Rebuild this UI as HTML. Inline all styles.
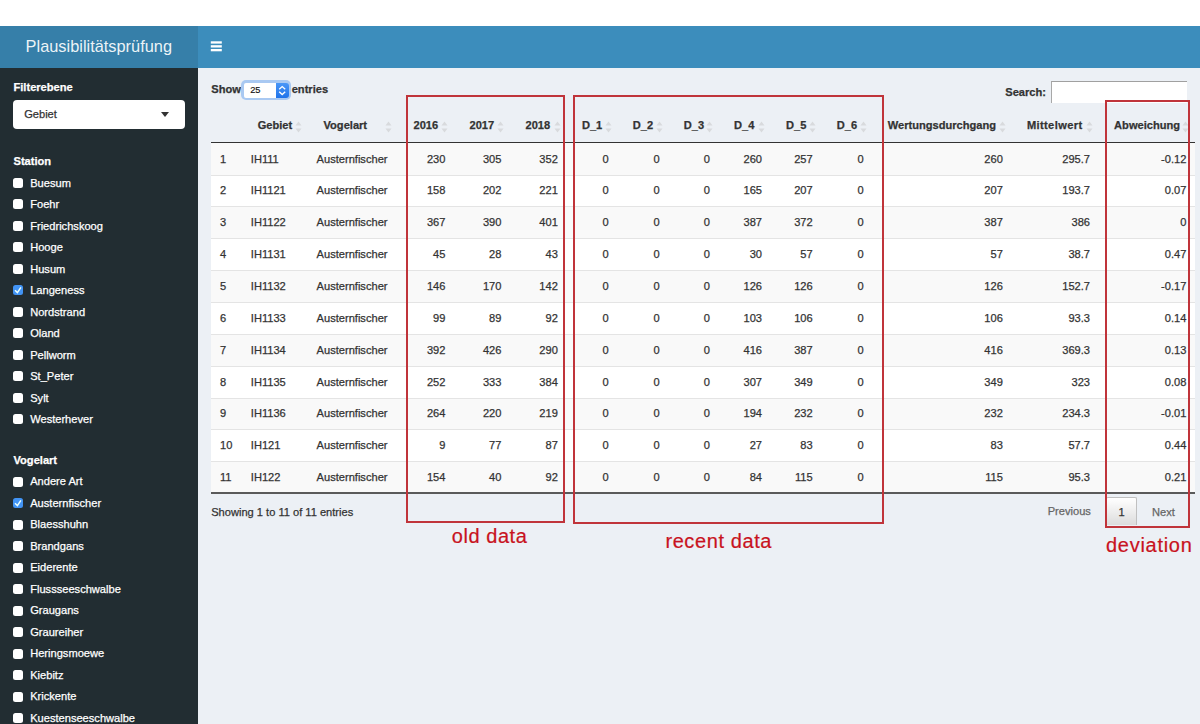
<!DOCTYPE html>
<html><head><meta charset="utf-8"><style>
html,body{margin:0;padding:0;width:1200px;height:724px;overflow:hidden;background:#fff;font-family:"Liberation Sans",sans-serif;}
.t{position:absolute;white-space:nowrap;-webkit-text-stroke:0.25px currentColor;}
.abs{position:absolute;}
</style></head><body>
<div class="abs" style="left:0;top:26px;width:198px;height:42px;background:#367fa9"></div>
<div class="abs" style="left:198px;top:26px;width:1002px;height:42px;background:#3c8dbc"></div>
<div class="t" style="left:25.60px;top:38.15px;font-size:16.36px;line-height:16.36px;font-weight:400;color:rgba(255,255,255,0.92);-webkit-text-stroke:0;">Plausibilitätsprüfung</div>
<svg class="abs" style="left:200px;top:30px" width="30" height="30" viewBox="200 30 30 30"><rect x="210.8" y="41.3" width="11" height="2.3" fill="#fff"/><rect x="210.8" y="45.2" width="11" height="2.3" fill="#fff"/><rect x="210.8" y="49.0" width="11" height="2.3" fill="#fff"/></svg>
<div class="abs" style="left:0;top:68px;width:198px;height:656px;background:#222d32"></div>
<div class="abs" style="left:198px;top:68px;width:1002px;height:656px;background:#ecf0f5"></div>
<div class="t" style="left:13.50px;top:82.10px;font-size:11.1px;line-height:11.1px;font-weight:700;color:#fff;">Filterebene</div>
<div class="abs" style="left:13px;top:100px;width:172px;height:29px;background:#fff;border-radius:4px"></div>
<div class="t" style="left:24.20px;top:109.40px;font-size:11.1px;line-height:11.1px;font-weight:400;color:#333;">Gebiet</div>
<div class="abs" style="left:161px;top:112px;width:0;height:0;border-left:4.5px solid transparent;border-right:4.5px solid transparent;border-top:5px solid #333"></div>
<div class="t" style="left:13.50px;top:156.10px;font-size:11.1px;line-height:11.1px;font-weight:700;color:#fff;">Station</div>
<div class="abs" style="left:13px;top:177.70px;width:10px;height:10px;background:#fff;border-radius:2.5px"></div>
<div class="t" style="left:30.20px;top:177.60px;font-size:11.1px;line-height:11.1px;font-weight:400;color:#fff;">Buesum</div>
<div class="abs" style="left:13px;top:199.22px;width:10px;height:10px;background:#fff;border-radius:2.5px"></div>
<div class="t" style="left:30.20px;top:199.12px;font-size:11.1px;line-height:11.1px;font-weight:400;color:#fff;">Foehr</div>
<div class="abs" style="left:13px;top:220.74px;width:10px;height:10px;background:#fff;border-radius:2.5px"></div>
<div class="t" style="left:30.20px;top:220.64px;font-size:11.1px;line-height:11.1px;font-weight:400;color:#fff;">Friedrichskoog</div>
<div class="abs" style="left:13px;top:242.26px;width:10px;height:10px;background:#fff;border-radius:2.5px"></div>
<div class="t" style="left:30.20px;top:242.16px;font-size:11.1px;line-height:11.1px;font-weight:400;color:#fff;">Hooge</div>
<div class="abs" style="left:13px;top:263.78px;width:10px;height:10px;background:#fff;border-radius:2.5px"></div>
<div class="t" style="left:30.20px;top:263.68px;font-size:11.1px;line-height:11.1px;font-weight:400;color:#fff;">Husum</div>
<div class="abs" style="left:13px;top:285.30px;width:10px;height:10px;background:#4294f5;border-radius:2.5px"><svg width="10" height="10" viewBox="0 0 10 10" style="position:absolute;left:0;top:0"><path d="M2 5.2 L4.4 7.6 L7.9 2.3" stroke="#eaffff" stroke-width="1.5" fill="none"/></svg></div>
<div class="t" style="left:30.20px;top:285.20px;font-size:11.1px;line-height:11.1px;font-weight:400;color:#fff;">Langeness</div>
<div class="abs" style="left:13px;top:306.82px;width:10px;height:10px;background:#fff;border-radius:2.5px"></div>
<div class="t" style="left:30.20px;top:306.72px;font-size:11.1px;line-height:11.1px;font-weight:400;color:#fff;">Nordstrand</div>
<div class="abs" style="left:13px;top:328.34px;width:10px;height:10px;background:#fff;border-radius:2.5px"></div>
<div class="t" style="left:30.20px;top:328.24px;font-size:11.1px;line-height:11.1px;font-weight:400;color:#fff;">Oland</div>
<div class="abs" style="left:13px;top:349.86px;width:10px;height:10px;background:#fff;border-radius:2.5px"></div>
<div class="t" style="left:30.20px;top:349.76px;font-size:11.1px;line-height:11.1px;font-weight:400;color:#fff;">Pellworm</div>
<div class="abs" style="left:13px;top:371.38px;width:10px;height:10px;background:#fff;border-radius:2.5px"></div>
<div class="t" style="left:30.20px;top:371.28px;font-size:11.1px;line-height:11.1px;font-weight:400;color:#fff;">St_Peter</div>
<div class="abs" style="left:13px;top:392.90px;width:10px;height:10px;background:#fff;border-radius:2.5px"></div>
<div class="t" style="left:30.20px;top:392.80px;font-size:11.1px;line-height:11.1px;font-weight:400;color:#fff;">Sylt</div>
<div class="abs" style="left:13px;top:414.42px;width:10px;height:10px;background:#fff;border-radius:2.5px"></div>
<div class="t" style="left:30.20px;top:414.32px;font-size:11.1px;line-height:11.1px;font-weight:400;color:#fff;">Westerhever</div>
<div class="t" style="left:13.50px;top:454.60px;font-size:11.1px;line-height:11.1px;font-weight:700;color:#fff;">Vogelart</div>
<div class="abs" style="left:13px;top:476.50px;width:10px;height:10px;background:#fff;border-radius:2.5px"></div>
<div class="t" style="left:30.20px;top:476.40px;font-size:11.1px;line-height:11.1px;font-weight:400;color:#fff;">Andere Art</div>
<div class="abs" style="left:13px;top:498.00px;width:10px;height:10px;background:#4294f5;border-radius:2.5px"><svg width="10" height="10" viewBox="0 0 10 10" style="position:absolute;left:0;top:0"><path d="M2 5.2 L4.4 7.6 L7.9 2.3" stroke="#eaffff" stroke-width="1.5" fill="none"/></svg></div>
<div class="t" style="left:30.20px;top:497.90px;font-size:11.1px;line-height:11.1px;font-weight:400;color:#fff;">Austernfischer</div>
<div class="abs" style="left:13px;top:519.50px;width:10px;height:10px;background:#fff;border-radius:2.5px"></div>
<div class="t" style="left:30.20px;top:519.40px;font-size:11.1px;line-height:11.1px;font-weight:400;color:#fff;">Blaesshuhn</div>
<div class="abs" style="left:13px;top:541.00px;width:10px;height:10px;background:#fff;border-radius:2.5px"></div>
<div class="t" style="left:30.20px;top:540.90px;font-size:11.1px;line-height:11.1px;font-weight:400;color:#fff;">Brandgans</div>
<div class="abs" style="left:13px;top:562.50px;width:10px;height:10px;background:#fff;border-radius:2.5px"></div>
<div class="t" style="left:30.20px;top:562.40px;font-size:11.1px;line-height:11.1px;font-weight:400;color:#fff;">Eiderente</div>
<div class="abs" style="left:13px;top:584.00px;width:10px;height:10px;background:#fff;border-radius:2.5px"></div>
<div class="t" style="left:30.20px;top:583.90px;font-size:11.1px;line-height:11.1px;font-weight:400;color:#fff;">Flussseeschwalbe</div>
<div class="abs" style="left:13px;top:605.50px;width:10px;height:10px;background:#fff;border-radius:2.5px"></div>
<div class="t" style="left:30.20px;top:605.40px;font-size:11.1px;line-height:11.1px;font-weight:400;color:#fff;">Graugans</div>
<div class="abs" style="left:13px;top:627.00px;width:10px;height:10px;background:#fff;border-radius:2.5px"></div>
<div class="t" style="left:30.20px;top:626.90px;font-size:11.1px;line-height:11.1px;font-weight:400;color:#fff;">Graureiher</div>
<div class="abs" style="left:13px;top:648.50px;width:10px;height:10px;background:#fff;border-radius:2.5px"></div>
<div class="t" style="left:30.20px;top:648.40px;font-size:11.1px;line-height:11.1px;font-weight:400;color:#fff;">Heringsmoewe</div>
<div class="abs" style="left:13px;top:670.00px;width:10px;height:10px;background:#fff;border-radius:2.5px"></div>
<div class="t" style="left:30.20px;top:669.90px;font-size:11.1px;line-height:11.1px;font-weight:400;color:#fff;">Kiebitz</div>
<div class="abs" style="left:13px;top:691.50px;width:10px;height:10px;background:#fff;border-radius:2.5px"></div>
<div class="t" style="left:30.20px;top:691.40px;font-size:11.1px;line-height:11.1px;font-weight:400;color:#fff;">Krickente</div>
<div class="abs" style="left:13px;top:713.00px;width:10px;height:10px;background:#fff;border-radius:2.5px"></div>
<div class="t" style="left:30.20px;top:712.90px;font-size:11.1px;line-height:11.1px;font-weight:400;color:#fff;">Kuestenseeschwalbe</div>
<div class="t" style="left:211.30px;top:84.40px;font-size:11.1px;line-height:11.1px;font-weight:700;color:#333;">Show</div>
<div class="abs" style="left:240.5px;top:80.2px;width:50px;height:20.3px;background:#a9c9f2;border-radius:5px"></div>
<div class="abs" style="left:243.5px;top:83px;width:32px;height:14.5px;background:#fff;border-radius:2px 0 0 2px"></div>
<div class="abs" style="left:276px;top:82.6px;width:12.5px;height:15.2px;background:linear-gradient(#4a97f7,#1f73ea);border-radius:0 3px 3px 0"></div>
<svg class="abs" style="left:276px;top:82.6px" width="13" height="15" viewBox="0 0 13 15"><path d="M3.2 6.2 L6.2 3.6 L9.2 6.2 M3.2 8.8 L6.2 11.6 L9.2 8.8" stroke="#fff" stroke-width="1.35" fill="none"/></svg>
<div class="t" style="left:250.20px;top:85.83px;font-size:9.3px;line-height:9.3px;font-weight:400;color:#111;-webkit-text-stroke:0.15px currentColor;">25</div>
<div class="t" style="left:291.70px;top:84.40px;font-size:11.1px;line-height:11.1px;font-weight:700;color:#333;">entries</div>
<div class="t" style="left:1005.30px;top:87.20px;font-size:11.1px;line-height:11.1px;font-weight:700;color:#333;">Search:</div>
<div class="abs" style="left:1051.3px;top:81px;width:135px;height:20.5px;background:#fff;border-top:1.6px solid #a0a0a0;border-left:1px solid #a8a8a8"></div>
<div class="abs" style="left:211px;top:143.20px;width:984px;height:31.85px;background:#f9f9f9"></div>
<div class="abs" style="left:211px;top:175.05px;width:984px;height:31.85px;background:#ffffff"></div>
<div class="abs" style="left:211px;top:174.55px;width:984px;height:1px;background:#e4e4e4"></div>
<div class="abs" style="left:211px;top:206.90px;width:984px;height:31.85px;background:#f9f9f9"></div>
<div class="abs" style="left:211px;top:206.40px;width:984px;height:1px;background:#e4e4e4"></div>
<div class="abs" style="left:211px;top:238.75px;width:984px;height:31.85px;background:#ffffff"></div>
<div class="abs" style="left:211px;top:238.25px;width:984px;height:1px;background:#e4e4e4"></div>
<div class="abs" style="left:211px;top:270.60px;width:984px;height:31.85px;background:#f9f9f9"></div>
<div class="abs" style="left:211px;top:270.10px;width:984px;height:1px;background:#e4e4e4"></div>
<div class="abs" style="left:211px;top:302.45px;width:984px;height:31.85px;background:#ffffff"></div>
<div class="abs" style="left:211px;top:301.95px;width:984px;height:1px;background:#e4e4e4"></div>
<div class="abs" style="left:211px;top:334.30px;width:984px;height:31.85px;background:#f9f9f9"></div>
<div class="abs" style="left:211px;top:333.80px;width:984px;height:1px;background:#e4e4e4"></div>
<div class="abs" style="left:211px;top:366.15px;width:984px;height:31.85px;background:#ffffff"></div>
<div class="abs" style="left:211px;top:365.65px;width:984px;height:1px;background:#e4e4e4"></div>
<div class="abs" style="left:211px;top:398.00px;width:984px;height:31.85px;background:#f9f9f9"></div>
<div class="abs" style="left:211px;top:397.50px;width:984px;height:1px;background:#e4e4e4"></div>
<div class="abs" style="left:211px;top:429.85px;width:984px;height:31.85px;background:#ffffff"></div>
<div class="abs" style="left:211px;top:429.35px;width:984px;height:1px;background:#e4e4e4"></div>
<div class="abs" style="left:211px;top:461.70px;width:984px;height:31.85px;background:#f9f9f9"></div>
<div class="abs" style="left:211px;top:461.20px;width:984px;height:1px;background:#e4e4e4"></div>
<div class="abs" style="left:211px;top:141.7px;width:984px;height:1.5px;background:#333"></div>
<div class="abs" style="left:211px;top:492px;width:984px;height:2px;background:#5a5a5a"></div>
<div class="t" style="left:257.70px;top:120.10px;font-size:11.1px;line-height:11.1px;font-weight:700;color:#333;">Gebiet</div>
<div class="abs" style="left:295.20px;top:118.6px;width:7px;height:12px"><svg width="7" height="12" viewBox="0 0 7 12"><path d="M3.5 0.5 L6.5 4.5 L0.5 4.5 Z M3.5 11.5 L6.5 7.5 L0.5 7.5 Z" fill="#d8dadd"/></svg></div>
<div class="t" style="left:323.50px;top:120.10px;font-size:11.1px;line-height:11.1px;font-weight:700;color:#333;">Vogelart</div>
<div class="abs" style="left:385.20px;top:118.6px;width:7px;height:12px"><svg width="7" height="12" viewBox="0 0 7 12"><path d="M3.5 0.5 L6.5 4.5 L0.5 4.5 Z M3.5 11.5 L6.5 7.5 L0.5 7.5 Z" fill="#d8dadd"/></svg></div>
<div class="t" style="left:413.50px;top:120.10px;font-size:11.1px;line-height:11.1px;font-weight:700;color:#333;">2016</div>
<div class="abs" style="left:441.20px;top:118.6px;width:7px;height:12px"><svg width="7" height="12" viewBox="0 0 7 12"><path d="M3.5 0.5 L6.5 4.5 L0.5 4.5 Z M3.5 11.5 L6.5 7.5 L0.5 7.5 Z" fill="#d8dadd"/></svg></div>
<div class="t" style="left:469.50px;top:120.10px;font-size:11.1px;line-height:11.1px;font-weight:700;color:#333;">2017</div>
<div class="abs" style="left:497.20px;top:118.6px;width:7px;height:12px"><svg width="7" height="12" viewBox="0 0 7 12"><path d="M3.5 0.5 L6.5 4.5 L0.5 4.5 Z M3.5 11.5 L6.5 7.5 L0.5 7.5 Z" fill="#d8dadd"/></svg></div>
<div class="t" style="left:525.50px;top:120.10px;font-size:11.1px;line-height:11.1px;font-weight:700;color:#333;">2018</div>
<div class="abs" style="left:553.60px;top:118.6px;width:7px;height:12px"><svg width="7" height="12" viewBox="0 0 7 12"><path d="M3.5 0.5 L6.5 4.5 L0.5 4.5 Z M3.5 11.5 L6.5 7.5 L0.5 7.5 Z" fill="#d8dadd"/></svg></div>
<div class="t" style="left:581.90px;top:120.10px;font-size:11.1px;line-height:11.1px;font-weight:700;color:#333;">D_1</div>
<div class="abs" style="left:604.50px;top:118.6px;width:7px;height:12px"><svg width="7" height="12" viewBox="0 0 7 12"><path d="M3.5 0.5 L6.5 4.5 L0.5 4.5 Z M3.5 11.5 L6.5 7.5 L0.5 7.5 Z" fill="#d8dadd"/></svg></div>
<div class="t" style="left:632.80px;top:120.10px;font-size:11.1px;line-height:11.1px;font-weight:700;color:#333;">D_2</div>
<div class="abs" style="left:655.50px;top:118.6px;width:7px;height:12px"><svg width="7" height="12" viewBox="0 0 7 12"><path d="M3.5 0.5 L6.5 4.5 L0.5 4.5 Z M3.5 11.5 L6.5 7.5 L0.5 7.5 Z" fill="#d8dadd"/></svg></div>
<div class="t" style="left:683.80px;top:120.10px;font-size:11.1px;line-height:11.1px;font-weight:700;color:#333;">D_3</div>
<div class="abs" style="left:705.80px;top:118.6px;width:7px;height:12px"><svg width="7" height="12" viewBox="0 0 7 12"><path d="M3.5 0.5 L6.5 4.5 L0.5 4.5 Z M3.5 11.5 L6.5 7.5 L0.5 7.5 Z" fill="#d8dadd"/></svg></div>
<div class="t" style="left:734.10px;top:120.10px;font-size:11.1px;line-height:11.1px;font-weight:700;color:#333;">D_4</div>
<div class="abs" style="left:757.80px;top:118.6px;width:7px;height:12px"><svg width="7" height="12" viewBox="0 0 7 12"><path d="M3.5 0.5 L6.5 4.5 L0.5 4.5 Z M3.5 11.5 L6.5 7.5 L0.5 7.5 Z" fill="#d8dadd"/></svg></div>
<div class="t" style="left:786.10px;top:120.10px;font-size:11.1px;line-height:11.1px;font-weight:700;color:#333;">D_5</div>
<div class="abs" style="left:808.50px;top:118.6px;width:7px;height:12px"><svg width="7" height="12" viewBox="0 0 7 12"><path d="M3.5 0.5 L6.5 4.5 L0.5 4.5 Z M3.5 11.5 L6.5 7.5 L0.5 7.5 Z" fill="#d8dadd"/></svg></div>
<div class="t" style="left:836.80px;top:120.10px;font-size:11.1px;line-height:11.1px;font-weight:700;color:#333;">D_6</div>
<div class="abs" style="left:859.50px;top:118.6px;width:7px;height:12px"><svg width="7" height="12" viewBox="0 0 7 12"><path d="M3.5 0.5 L6.5 4.5 L0.5 4.5 Z M3.5 11.5 L6.5 7.5 L0.5 7.5 Z" fill="#d8dadd"/></svg></div>
<div class="t" style="left:887.80px;top:120.10px;font-size:11.1px;line-height:11.1px;font-weight:700;color:#333;">Wertungsdurchgang</div>
<div class="abs" style="left:998.60px;top:118.6px;width:7px;height:12px"><svg width="7" height="12" viewBox="0 0 7 12"><path d="M3.5 0.5 L6.5 4.5 L0.5 4.5 Z M3.5 11.5 L6.5 7.5 L0.5 7.5 Z" fill="#d8dadd"/></svg></div>
<div class="t" style="left:1026.90px;top:120.10px;font-size:11.1px;line-height:11.1px;font-weight:700;color:#333;letter-spacing:0.38px;">Mittelwert</div>
<div class="abs" style="left:1085.80px;top:118.6px;width:7px;height:12px"><svg width="7" height="12" viewBox="0 0 7 12"><path d="M3.5 0.5 L6.5 4.5 L0.5 4.5 Z M3.5 11.5 L6.5 7.5 L0.5 7.5 Z" fill="#d8dadd"/></svg></div>
<div class="t" style="left:1114.10px;top:120.10px;font-size:11.1px;line-height:11.1px;font-weight:700;color:#333;">Abweichung</div>
<div class="abs" style="left:1182.20px;top:118.6px;width:7px;height:12px"><svg width="7" height="12" viewBox="0 0 7 12"><path d="M3.5 0.5 L6.5 4.5 L0.5 4.5 Z M3.5 11.5 L6.5 7.5 L0.5 7.5 Z" fill="#d8dadd"/></svg></div>
<div class="t" style="left:220.00px;top:153.60px;font-size:11.1px;line-height:11.1px;font-weight:400;color:#333;">1</div>
<div class="t" style="left:250.80px;top:153.60px;font-size:11.1px;line-height:11.1px;font-weight:400;color:#333;">IH111</div>
<div class="t" style="left:316.60px;top:153.60px;font-size:11.1px;line-height:11.1px;font-weight:400;color:#333;">Austernfischer</div>
<div class="t" style="right:754.60px;top:153.60px;font-size:11.1px;line-height:11.1px;font-weight:400;color:#333;">230</div>
<div class="t" style="right:698.60px;top:153.60px;font-size:11.1px;line-height:11.1px;font-weight:400;color:#333;">305</div>
<div class="t" style="right:642.20px;top:153.60px;font-size:11.1px;line-height:11.1px;font-weight:400;color:#333;">352</div>
<div class="t" style="right:591.30px;top:153.60px;font-size:11.1px;line-height:11.1px;font-weight:400;color:#333;">0</div>
<div class="t" style="right:540.30px;top:153.60px;font-size:11.1px;line-height:11.1px;font-weight:400;color:#333;">0</div>
<div class="t" style="right:490.00px;top:153.60px;font-size:11.1px;line-height:11.1px;font-weight:400;color:#333;">0</div>
<div class="t" style="right:438.00px;top:153.60px;font-size:11.1px;line-height:11.1px;font-weight:400;color:#333;">260</div>
<div class="t" style="right:387.30px;top:153.60px;font-size:11.1px;line-height:11.1px;font-weight:400;color:#333;">257</div>
<div class="t" style="right:336.30px;top:153.60px;font-size:11.1px;line-height:11.1px;font-weight:400;color:#333;">0</div>
<div class="t" style="right:197.20px;top:153.60px;font-size:11.1px;line-height:11.1px;font-weight:400;color:#333;">260</div>
<div class="t" style="right:110.00px;top:153.60px;font-size:11.1px;line-height:11.1px;font-weight:400;color:#333;">295.7</div>
<div class="t" style="right:13.60px;top:153.60px;font-size:11.1px;line-height:11.1px;font-weight:400;color:#333;">-0.12</div>
<div class="t" style="left:220.00px;top:185.45px;font-size:11.1px;line-height:11.1px;font-weight:400;color:#333;">2</div>
<div class="t" style="left:250.80px;top:185.45px;font-size:11.1px;line-height:11.1px;font-weight:400;color:#333;">IH1121</div>
<div class="t" style="left:316.60px;top:185.45px;font-size:11.1px;line-height:11.1px;font-weight:400;color:#333;">Austernfischer</div>
<div class="t" style="right:754.60px;top:185.45px;font-size:11.1px;line-height:11.1px;font-weight:400;color:#333;">158</div>
<div class="t" style="right:698.60px;top:185.45px;font-size:11.1px;line-height:11.1px;font-weight:400;color:#333;">202</div>
<div class="t" style="right:642.20px;top:185.45px;font-size:11.1px;line-height:11.1px;font-weight:400;color:#333;">221</div>
<div class="t" style="right:591.30px;top:185.45px;font-size:11.1px;line-height:11.1px;font-weight:400;color:#333;">0</div>
<div class="t" style="right:540.30px;top:185.45px;font-size:11.1px;line-height:11.1px;font-weight:400;color:#333;">0</div>
<div class="t" style="right:490.00px;top:185.45px;font-size:11.1px;line-height:11.1px;font-weight:400;color:#333;">0</div>
<div class="t" style="right:438.00px;top:185.45px;font-size:11.1px;line-height:11.1px;font-weight:400;color:#333;">165</div>
<div class="t" style="right:387.30px;top:185.45px;font-size:11.1px;line-height:11.1px;font-weight:400;color:#333;">207</div>
<div class="t" style="right:336.30px;top:185.45px;font-size:11.1px;line-height:11.1px;font-weight:400;color:#333;">0</div>
<div class="t" style="right:197.20px;top:185.45px;font-size:11.1px;line-height:11.1px;font-weight:400;color:#333;">207</div>
<div class="t" style="right:110.00px;top:185.45px;font-size:11.1px;line-height:11.1px;font-weight:400;color:#333;">193.7</div>
<div class="t" style="right:13.60px;top:185.45px;font-size:11.1px;line-height:11.1px;font-weight:400;color:#333;">0.07</div>
<div class="t" style="left:220.00px;top:217.30px;font-size:11.1px;line-height:11.1px;font-weight:400;color:#333;">3</div>
<div class="t" style="left:250.80px;top:217.30px;font-size:11.1px;line-height:11.1px;font-weight:400;color:#333;">IH1122</div>
<div class="t" style="left:316.60px;top:217.30px;font-size:11.1px;line-height:11.1px;font-weight:400;color:#333;">Austernfischer</div>
<div class="t" style="right:754.60px;top:217.30px;font-size:11.1px;line-height:11.1px;font-weight:400;color:#333;">367</div>
<div class="t" style="right:698.60px;top:217.30px;font-size:11.1px;line-height:11.1px;font-weight:400;color:#333;">390</div>
<div class="t" style="right:642.20px;top:217.30px;font-size:11.1px;line-height:11.1px;font-weight:400;color:#333;">401</div>
<div class="t" style="right:591.30px;top:217.30px;font-size:11.1px;line-height:11.1px;font-weight:400;color:#333;">0</div>
<div class="t" style="right:540.30px;top:217.30px;font-size:11.1px;line-height:11.1px;font-weight:400;color:#333;">0</div>
<div class="t" style="right:490.00px;top:217.30px;font-size:11.1px;line-height:11.1px;font-weight:400;color:#333;">0</div>
<div class="t" style="right:438.00px;top:217.30px;font-size:11.1px;line-height:11.1px;font-weight:400;color:#333;">387</div>
<div class="t" style="right:387.30px;top:217.30px;font-size:11.1px;line-height:11.1px;font-weight:400;color:#333;">372</div>
<div class="t" style="right:336.30px;top:217.30px;font-size:11.1px;line-height:11.1px;font-weight:400;color:#333;">0</div>
<div class="t" style="right:197.20px;top:217.30px;font-size:11.1px;line-height:11.1px;font-weight:400;color:#333;">387</div>
<div class="t" style="right:110.00px;top:217.30px;font-size:11.1px;line-height:11.1px;font-weight:400;color:#333;">386</div>
<div class="t" style="right:13.60px;top:217.30px;font-size:11.1px;line-height:11.1px;font-weight:400;color:#333;">0</div>
<div class="t" style="left:220.00px;top:249.15px;font-size:11.1px;line-height:11.1px;font-weight:400;color:#333;">4</div>
<div class="t" style="left:250.80px;top:249.15px;font-size:11.1px;line-height:11.1px;font-weight:400;color:#333;">IH1131</div>
<div class="t" style="left:316.60px;top:249.15px;font-size:11.1px;line-height:11.1px;font-weight:400;color:#333;">Austernfischer</div>
<div class="t" style="right:754.60px;top:249.15px;font-size:11.1px;line-height:11.1px;font-weight:400;color:#333;">45</div>
<div class="t" style="right:698.60px;top:249.15px;font-size:11.1px;line-height:11.1px;font-weight:400;color:#333;">28</div>
<div class="t" style="right:642.20px;top:249.15px;font-size:11.1px;line-height:11.1px;font-weight:400;color:#333;">43</div>
<div class="t" style="right:591.30px;top:249.15px;font-size:11.1px;line-height:11.1px;font-weight:400;color:#333;">0</div>
<div class="t" style="right:540.30px;top:249.15px;font-size:11.1px;line-height:11.1px;font-weight:400;color:#333;">0</div>
<div class="t" style="right:490.00px;top:249.15px;font-size:11.1px;line-height:11.1px;font-weight:400;color:#333;">0</div>
<div class="t" style="right:438.00px;top:249.15px;font-size:11.1px;line-height:11.1px;font-weight:400;color:#333;">30</div>
<div class="t" style="right:387.30px;top:249.15px;font-size:11.1px;line-height:11.1px;font-weight:400;color:#333;">57</div>
<div class="t" style="right:336.30px;top:249.15px;font-size:11.1px;line-height:11.1px;font-weight:400;color:#333;">0</div>
<div class="t" style="right:197.20px;top:249.15px;font-size:11.1px;line-height:11.1px;font-weight:400;color:#333;">57</div>
<div class="t" style="right:110.00px;top:249.15px;font-size:11.1px;line-height:11.1px;font-weight:400;color:#333;">38.7</div>
<div class="t" style="right:13.60px;top:249.15px;font-size:11.1px;line-height:11.1px;font-weight:400;color:#333;">0.47</div>
<div class="t" style="left:220.00px;top:281.00px;font-size:11.1px;line-height:11.1px;font-weight:400;color:#333;">5</div>
<div class="t" style="left:250.80px;top:281.00px;font-size:11.1px;line-height:11.1px;font-weight:400;color:#333;">IH1132</div>
<div class="t" style="left:316.60px;top:281.00px;font-size:11.1px;line-height:11.1px;font-weight:400;color:#333;">Austernfischer</div>
<div class="t" style="right:754.60px;top:281.00px;font-size:11.1px;line-height:11.1px;font-weight:400;color:#333;">146</div>
<div class="t" style="right:698.60px;top:281.00px;font-size:11.1px;line-height:11.1px;font-weight:400;color:#333;">170</div>
<div class="t" style="right:642.20px;top:281.00px;font-size:11.1px;line-height:11.1px;font-weight:400;color:#333;">142</div>
<div class="t" style="right:591.30px;top:281.00px;font-size:11.1px;line-height:11.1px;font-weight:400;color:#333;">0</div>
<div class="t" style="right:540.30px;top:281.00px;font-size:11.1px;line-height:11.1px;font-weight:400;color:#333;">0</div>
<div class="t" style="right:490.00px;top:281.00px;font-size:11.1px;line-height:11.1px;font-weight:400;color:#333;">0</div>
<div class="t" style="right:438.00px;top:281.00px;font-size:11.1px;line-height:11.1px;font-weight:400;color:#333;">126</div>
<div class="t" style="right:387.30px;top:281.00px;font-size:11.1px;line-height:11.1px;font-weight:400;color:#333;">126</div>
<div class="t" style="right:336.30px;top:281.00px;font-size:11.1px;line-height:11.1px;font-weight:400;color:#333;">0</div>
<div class="t" style="right:197.20px;top:281.00px;font-size:11.1px;line-height:11.1px;font-weight:400;color:#333;">126</div>
<div class="t" style="right:110.00px;top:281.00px;font-size:11.1px;line-height:11.1px;font-weight:400;color:#333;">152.7</div>
<div class="t" style="right:13.60px;top:281.00px;font-size:11.1px;line-height:11.1px;font-weight:400;color:#333;">-0.17</div>
<div class="t" style="left:220.00px;top:312.85px;font-size:11.1px;line-height:11.1px;font-weight:400;color:#333;">6</div>
<div class="t" style="left:250.80px;top:312.85px;font-size:11.1px;line-height:11.1px;font-weight:400;color:#333;">IH1133</div>
<div class="t" style="left:316.60px;top:312.85px;font-size:11.1px;line-height:11.1px;font-weight:400;color:#333;">Austernfischer</div>
<div class="t" style="right:754.60px;top:312.85px;font-size:11.1px;line-height:11.1px;font-weight:400;color:#333;">99</div>
<div class="t" style="right:698.60px;top:312.85px;font-size:11.1px;line-height:11.1px;font-weight:400;color:#333;">89</div>
<div class="t" style="right:642.20px;top:312.85px;font-size:11.1px;line-height:11.1px;font-weight:400;color:#333;">92</div>
<div class="t" style="right:591.30px;top:312.85px;font-size:11.1px;line-height:11.1px;font-weight:400;color:#333;">0</div>
<div class="t" style="right:540.30px;top:312.85px;font-size:11.1px;line-height:11.1px;font-weight:400;color:#333;">0</div>
<div class="t" style="right:490.00px;top:312.85px;font-size:11.1px;line-height:11.1px;font-weight:400;color:#333;">0</div>
<div class="t" style="right:438.00px;top:312.85px;font-size:11.1px;line-height:11.1px;font-weight:400;color:#333;">103</div>
<div class="t" style="right:387.30px;top:312.85px;font-size:11.1px;line-height:11.1px;font-weight:400;color:#333;">106</div>
<div class="t" style="right:336.30px;top:312.85px;font-size:11.1px;line-height:11.1px;font-weight:400;color:#333;">0</div>
<div class="t" style="right:197.20px;top:312.85px;font-size:11.1px;line-height:11.1px;font-weight:400;color:#333;">106</div>
<div class="t" style="right:110.00px;top:312.85px;font-size:11.1px;line-height:11.1px;font-weight:400;color:#333;">93.3</div>
<div class="t" style="right:13.60px;top:312.85px;font-size:11.1px;line-height:11.1px;font-weight:400;color:#333;">0.14</div>
<div class="t" style="left:220.00px;top:344.70px;font-size:11.1px;line-height:11.1px;font-weight:400;color:#333;">7</div>
<div class="t" style="left:250.80px;top:344.70px;font-size:11.1px;line-height:11.1px;font-weight:400;color:#333;">IH1134</div>
<div class="t" style="left:316.60px;top:344.70px;font-size:11.1px;line-height:11.1px;font-weight:400;color:#333;">Austernfischer</div>
<div class="t" style="right:754.60px;top:344.70px;font-size:11.1px;line-height:11.1px;font-weight:400;color:#333;">392</div>
<div class="t" style="right:698.60px;top:344.70px;font-size:11.1px;line-height:11.1px;font-weight:400;color:#333;">426</div>
<div class="t" style="right:642.20px;top:344.70px;font-size:11.1px;line-height:11.1px;font-weight:400;color:#333;">290</div>
<div class="t" style="right:591.30px;top:344.70px;font-size:11.1px;line-height:11.1px;font-weight:400;color:#333;">0</div>
<div class="t" style="right:540.30px;top:344.70px;font-size:11.1px;line-height:11.1px;font-weight:400;color:#333;">0</div>
<div class="t" style="right:490.00px;top:344.70px;font-size:11.1px;line-height:11.1px;font-weight:400;color:#333;">0</div>
<div class="t" style="right:438.00px;top:344.70px;font-size:11.1px;line-height:11.1px;font-weight:400;color:#333;">416</div>
<div class="t" style="right:387.30px;top:344.70px;font-size:11.1px;line-height:11.1px;font-weight:400;color:#333;">387</div>
<div class="t" style="right:336.30px;top:344.70px;font-size:11.1px;line-height:11.1px;font-weight:400;color:#333;">0</div>
<div class="t" style="right:197.20px;top:344.70px;font-size:11.1px;line-height:11.1px;font-weight:400;color:#333;">416</div>
<div class="t" style="right:110.00px;top:344.70px;font-size:11.1px;line-height:11.1px;font-weight:400;color:#333;">369.3</div>
<div class="t" style="right:13.60px;top:344.70px;font-size:11.1px;line-height:11.1px;font-weight:400;color:#333;">0.13</div>
<div class="t" style="left:220.00px;top:376.55px;font-size:11.1px;line-height:11.1px;font-weight:400;color:#333;">8</div>
<div class="t" style="left:250.80px;top:376.55px;font-size:11.1px;line-height:11.1px;font-weight:400;color:#333;">IH1135</div>
<div class="t" style="left:316.60px;top:376.55px;font-size:11.1px;line-height:11.1px;font-weight:400;color:#333;">Austernfischer</div>
<div class="t" style="right:754.60px;top:376.55px;font-size:11.1px;line-height:11.1px;font-weight:400;color:#333;">252</div>
<div class="t" style="right:698.60px;top:376.55px;font-size:11.1px;line-height:11.1px;font-weight:400;color:#333;">333</div>
<div class="t" style="right:642.20px;top:376.55px;font-size:11.1px;line-height:11.1px;font-weight:400;color:#333;">384</div>
<div class="t" style="right:591.30px;top:376.55px;font-size:11.1px;line-height:11.1px;font-weight:400;color:#333;">0</div>
<div class="t" style="right:540.30px;top:376.55px;font-size:11.1px;line-height:11.1px;font-weight:400;color:#333;">0</div>
<div class="t" style="right:490.00px;top:376.55px;font-size:11.1px;line-height:11.1px;font-weight:400;color:#333;">0</div>
<div class="t" style="right:438.00px;top:376.55px;font-size:11.1px;line-height:11.1px;font-weight:400;color:#333;">307</div>
<div class="t" style="right:387.30px;top:376.55px;font-size:11.1px;line-height:11.1px;font-weight:400;color:#333;">349</div>
<div class="t" style="right:336.30px;top:376.55px;font-size:11.1px;line-height:11.1px;font-weight:400;color:#333;">0</div>
<div class="t" style="right:197.20px;top:376.55px;font-size:11.1px;line-height:11.1px;font-weight:400;color:#333;">349</div>
<div class="t" style="right:110.00px;top:376.55px;font-size:11.1px;line-height:11.1px;font-weight:400;color:#333;">323</div>
<div class="t" style="right:13.60px;top:376.55px;font-size:11.1px;line-height:11.1px;font-weight:400;color:#333;">0.08</div>
<div class="t" style="left:220.00px;top:408.40px;font-size:11.1px;line-height:11.1px;font-weight:400;color:#333;">9</div>
<div class="t" style="left:250.80px;top:408.40px;font-size:11.1px;line-height:11.1px;font-weight:400;color:#333;">IH1136</div>
<div class="t" style="left:316.60px;top:408.40px;font-size:11.1px;line-height:11.1px;font-weight:400;color:#333;">Austernfischer</div>
<div class="t" style="right:754.60px;top:408.40px;font-size:11.1px;line-height:11.1px;font-weight:400;color:#333;">264</div>
<div class="t" style="right:698.60px;top:408.40px;font-size:11.1px;line-height:11.1px;font-weight:400;color:#333;">220</div>
<div class="t" style="right:642.20px;top:408.40px;font-size:11.1px;line-height:11.1px;font-weight:400;color:#333;">219</div>
<div class="t" style="right:591.30px;top:408.40px;font-size:11.1px;line-height:11.1px;font-weight:400;color:#333;">0</div>
<div class="t" style="right:540.30px;top:408.40px;font-size:11.1px;line-height:11.1px;font-weight:400;color:#333;">0</div>
<div class="t" style="right:490.00px;top:408.40px;font-size:11.1px;line-height:11.1px;font-weight:400;color:#333;">0</div>
<div class="t" style="right:438.00px;top:408.40px;font-size:11.1px;line-height:11.1px;font-weight:400;color:#333;">194</div>
<div class="t" style="right:387.30px;top:408.40px;font-size:11.1px;line-height:11.1px;font-weight:400;color:#333;">232</div>
<div class="t" style="right:336.30px;top:408.40px;font-size:11.1px;line-height:11.1px;font-weight:400;color:#333;">0</div>
<div class="t" style="right:197.20px;top:408.40px;font-size:11.1px;line-height:11.1px;font-weight:400;color:#333;">232</div>
<div class="t" style="right:110.00px;top:408.40px;font-size:11.1px;line-height:11.1px;font-weight:400;color:#333;">234.3</div>
<div class="t" style="right:13.60px;top:408.40px;font-size:11.1px;line-height:11.1px;font-weight:400;color:#333;">-0.01</div>
<div class="t" style="left:220.00px;top:440.25px;font-size:11.1px;line-height:11.1px;font-weight:400;color:#333;">10</div>
<div class="t" style="left:250.80px;top:440.25px;font-size:11.1px;line-height:11.1px;font-weight:400;color:#333;">IH121</div>
<div class="t" style="left:316.60px;top:440.25px;font-size:11.1px;line-height:11.1px;font-weight:400;color:#333;">Austernfischer</div>
<div class="t" style="right:754.60px;top:440.25px;font-size:11.1px;line-height:11.1px;font-weight:400;color:#333;">9</div>
<div class="t" style="right:698.60px;top:440.25px;font-size:11.1px;line-height:11.1px;font-weight:400;color:#333;">77</div>
<div class="t" style="right:642.20px;top:440.25px;font-size:11.1px;line-height:11.1px;font-weight:400;color:#333;">87</div>
<div class="t" style="right:591.30px;top:440.25px;font-size:11.1px;line-height:11.1px;font-weight:400;color:#333;">0</div>
<div class="t" style="right:540.30px;top:440.25px;font-size:11.1px;line-height:11.1px;font-weight:400;color:#333;">0</div>
<div class="t" style="right:490.00px;top:440.25px;font-size:11.1px;line-height:11.1px;font-weight:400;color:#333;">0</div>
<div class="t" style="right:438.00px;top:440.25px;font-size:11.1px;line-height:11.1px;font-weight:400;color:#333;">27</div>
<div class="t" style="right:387.30px;top:440.25px;font-size:11.1px;line-height:11.1px;font-weight:400;color:#333;">83</div>
<div class="t" style="right:336.30px;top:440.25px;font-size:11.1px;line-height:11.1px;font-weight:400;color:#333;">0</div>
<div class="t" style="right:197.20px;top:440.25px;font-size:11.1px;line-height:11.1px;font-weight:400;color:#333;">83</div>
<div class="t" style="right:110.00px;top:440.25px;font-size:11.1px;line-height:11.1px;font-weight:400;color:#333;">57.7</div>
<div class="t" style="right:13.60px;top:440.25px;font-size:11.1px;line-height:11.1px;font-weight:400;color:#333;">0.44</div>
<div class="t" style="left:220.00px;top:472.10px;font-size:11.1px;line-height:11.1px;font-weight:400;color:#333;">11</div>
<div class="t" style="left:250.80px;top:472.10px;font-size:11.1px;line-height:11.1px;font-weight:400;color:#333;">IH122</div>
<div class="t" style="left:316.60px;top:472.10px;font-size:11.1px;line-height:11.1px;font-weight:400;color:#333;">Austernfischer</div>
<div class="t" style="right:754.60px;top:472.10px;font-size:11.1px;line-height:11.1px;font-weight:400;color:#333;">154</div>
<div class="t" style="right:698.60px;top:472.10px;font-size:11.1px;line-height:11.1px;font-weight:400;color:#333;">40</div>
<div class="t" style="right:642.20px;top:472.10px;font-size:11.1px;line-height:11.1px;font-weight:400;color:#333;">92</div>
<div class="t" style="right:591.30px;top:472.10px;font-size:11.1px;line-height:11.1px;font-weight:400;color:#333;">0</div>
<div class="t" style="right:540.30px;top:472.10px;font-size:11.1px;line-height:11.1px;font-weight:400;color:#333;">0</div>
<div class="t" style="right:490.00px;top:472.10px;font-size:11.1px;line-height:11.1px;font-weight:400;color:#333;">0</div>
<div class="t" style="right:438.00px;top:472.10px;font-size:11.1px;line-height:11.1px;font-weight:400;color:#333;">84</div>
<div class="t" style="right:387.30px;top:472.10px;font-size:11.1px;line-height:11.1px;font-weight:400;color:#333;">115</div>
<div class="t" style="right:336.30px;top:472.10px;font-size:11.1px;line-height:11.1px;font-weight:400;color:#333;">0</div>
<div class="t" style="right:197.20px;top:472.10px;font-size:11.1px;line-height:11.1px;font-weight:400;color:#333;">115</div>
<div class="t" style="right:110.00px;top:472.10px;font-size:11.1px;line-height:11.1px;font-weight:400;color:#333;">95.3</div>
<div class="t" style="right:13.60px;top:472.10px;font-size:11.1px;line-height:11.1px;font-weight:400;color:#333;">0.21</div>
<div class="t" style="left:211.20px;top:506.60px;font-size:11.1px;line-height:11.1px;font-weight:400;color:#333;">Showing 1 to 11 of 11 entries</div>
<div class="t" style="left:1047.70px;top:506.30px;font-size:11.1px;line-height:11.1px;font-weight:400;color:#666;">Previous</div>
<div class="abs" style="left:1105.8px;top:496.8px;width:31.2px;height:28.6px;background:linear-gradient(#ffffff,#dcdcdc);border:1px solid #c0c0c0;border-bottom:none;box-sizing:border-box;border-radius:2px 2px 0 0"></div>
<div class="t" style="left:1118.60px;top:506.60px;font-size:11.1px;line-height:11.1px;font-weight:400;color:#333;">1</div>
<div class="t" style="left:1152.00px;top:506.60px;font-size:11.1px;line-height:11.1px;font-weight:400;color:#666;">Next</div>
<div class="abs" style="left:405.7px;top:94.8px;width:159.8px;height:428.7px;border:2px solid #c0343a;box-sizing:border-box"></div>
<div class="abs" style="left:572.7px;top:94.8px;width:311.3px;height:429.2px;border:2px solid #c0343a;box-sizing:border-box"></div>
<div class="abs" style="left:1104.5px;top:99.7px;width:85.1px;height:428.3px;border:2px solid #c0343a;box-sizing:border-box"></div>
<div class="t" style="left:451.70px;top:526.07px;font-size:20px;line-height:20px;font-weight:400;color:#c81220;letter-spacing:0.57px;-webkit-text-stroke:0.2px currentColor;">old data</div>
<div class="t" style="left:665.40px;top:531.07px;font-size:20px;line-height:20px;font-weight:400;color:#c81220;letter-spacing:0.6px;-webkit-text-stroke:0.2px currentColor;">recent data</div>
<div class="t" style="left:1106.00px;top:535.07px;font-size:20px;line-height:20px;font-weight:400;color:#c81220;letter-spacing:0.72px;-webkit-text-stroke:0.2px currentColor;">deviation</div>
</body></html>
